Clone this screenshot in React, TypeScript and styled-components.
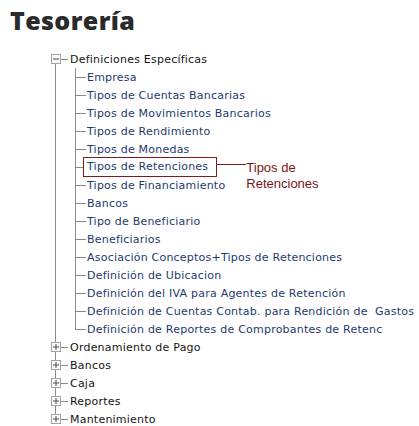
import styled, { createGlobalStyle } from "styled-components";

const GlobalStyle = createGlobalStyle`
  html, body {
    margin: 0;
    padding: 0;
    background: #ffffff;
  }
`;

const Page = styled.div`
  padding: 5px 0 0 10px;
  width: 409px;
  height: 421px;
  overflow: hidden;
`;

const Title = styled.h1`
  margin: 0 0 15px 0;
  font-family: "Open Sans", "DejaVu Sans", sans-serif;
  font-weight: 800;
  font-size: 25px;
  line-height: 30px;
  color: #2a2a2a;
  letter-spacing: 0.4px;
`;

const Tree = styled.ul`
  list-style: none;
  margin: 0;
  padding: 0 0 0 41px;
  font-family: "DejaVu Sans", Verdana, sans-serif;
  font-size: 11px;
  letter-spacing: 0.22px;
`;

const RootItem = styled.li`
  position: relative;

  &:not(:last-child)::before {
    content: "";
    position: absolute;
    left: 4px;
    top: 9px;
    bottom: 0;
    width: 1px;
    background: #8a8a8a;
  }

  &:not(:first-child)::after {
    content: "";
    position: absolute;
    left: 4px;
    top: 0;
    height: 9px;
    width: 1px;
    background: #8a8a8a;
  }
`;

const Row = styled.div`
  display: flex;
  align-items: center;
  height: 18px;
  white-space: pre;
`;

const ToggleBox = styled.svg`
  position: relative;
  z-index: 1;
  flex: none;
  display: block;
`;

const Connector = styled.span<{ $w: number; $color?: string }>`
  flex: none;
  width: ${(p) => p.$w}px;
  height: 1px;
  background: ${(p) => p.$color ?? "#8a8a8a"};
`;

const RootLabel = styled.span`
  margin-left: 2px;
  color: #151515;
`;

const Children = styled.ul`
  list-style: none;
  margin: 0;
  padding: 0 0 0 24px;
`;

const ChildItem = styled.li`
  position: relative;

  &::before {
    content: "";
    position: absolute;
    left: 0;
    top: 0;
    width: 1px;
    height: 100%;
    background: #8a8a8a;
  }

  &:last-child::before {
    height: 9px;
  }
`;

const ChildLink = styled.a<{ $boxed?: boolean }>`
  color: #1d3a6e;
  text-decoration: none;
  margin-left: ${(p) => (p.$boxed ? 0 : 1)}px;
  ${(p) =>
    p.$boxed &&
    `
    border: 1px solid #7d1c1c;
    padding: 2px 8px 2px 3px;
    line-height: 14px;
  `}
`;

const Callout = styled.div`
  align-self: flex-start;
  margin-top: 2px;
  font-family: "Liberation Sans", Arial, sans-serif;
  font-size: 13px;
  line-height: 16px;
  letter-spacing: 0;
  color: #7a1515;
  white-space: nowrap;
`;

const CalloutLine = styled(Connector)`
  align-self: flex-start;
  margin-top: 6px;
`;

function Toggle({ open }: { open: boolean }) {
  return (
    <ToggleBox width="10" height="10" viewBox="0 0 10 10">
      <rect x="0.5" y="0.5" width="9" height="9" fill="#fbfbfb" stroke="#a3a3a3" />
      <line x1="2" y1="5" x2="8" y2="5" stroke="#4a4a4a" />
      {!open && <line x1="5" y1="2" x2="5" y2="8" stroke="#4a4a4a" />}
    </ToggleBox>
  );
}

const definiciones = [
  "Empresa",
  "Tipos de Cuentas Bancarias",
  "Tipos de Movimientos Bancarios",
  "Tipos de Rendimiento",
  "Tipos de Monedas",
  "Tipos de Retenciones",
  "Tipos de Financiamiento",
  "Bancos",
  "Tipo de Beneficiario",
  "Beneficiarios",
  "Asociación Conceptos+Tipos de Retenciones",
  "Definición de Ubicacion",
  "Definición del IVA para Agentes de Retención",
  "Definición de Cuentas Contab. para Rendición de  Gastos",
  "Definición de Reportes de Comprobantes de Retenc",
];

const closedSections = [
  "Ordenamiento de Pago",
  "Bancos",
  "Caja",
  "Reportes",
  "Mantenimiento",
];

const HIGHLIGHT = "Tipos de Retenciones";

export default function App() {
  return (
    <Page>
      <GlobalStyle />
      <Title>Tesorería</Title>
      <Tree>
        <RootItem>
          <Row>
            <Toggle open />
            <Connector $w={7} />
            <RootLabel>Definiciones Específicas</RootLabel>
          </Row>
          <Children>
            {definiciones.map((name) => {
              const boxed = name === HIGHLIGHT;
              return (
                <ChildItem key={name}>
                  <Row>
                    <Connector $w={boxed ? 8 : 11} />
                    <ChildLink href="#" $boxed={boxed}>
                      {name}
                    </ChildLink>
                    {boxed && (
                      <>
                        <CalloutLine $w={29} $color="#7d1c1c" />
                        <Callout>
                          Tipos de
                          <br />
                          Retenciones
                        </Callout>
                      </>
                    )}
                  </Row>
                </ChildItem>
              );
            })}
          </Children>
        </RootItem>
        {closedSections.map((name) => (
          <RootItem key={name}>
            <Row>
              <Toggle open={false} />
              <Connector $w={7} />
              <RootLabel>{name}</RootLabel>
            </Row>
          </RootItem>
        ))}
      </Tree>
    </Page>
  );
}
